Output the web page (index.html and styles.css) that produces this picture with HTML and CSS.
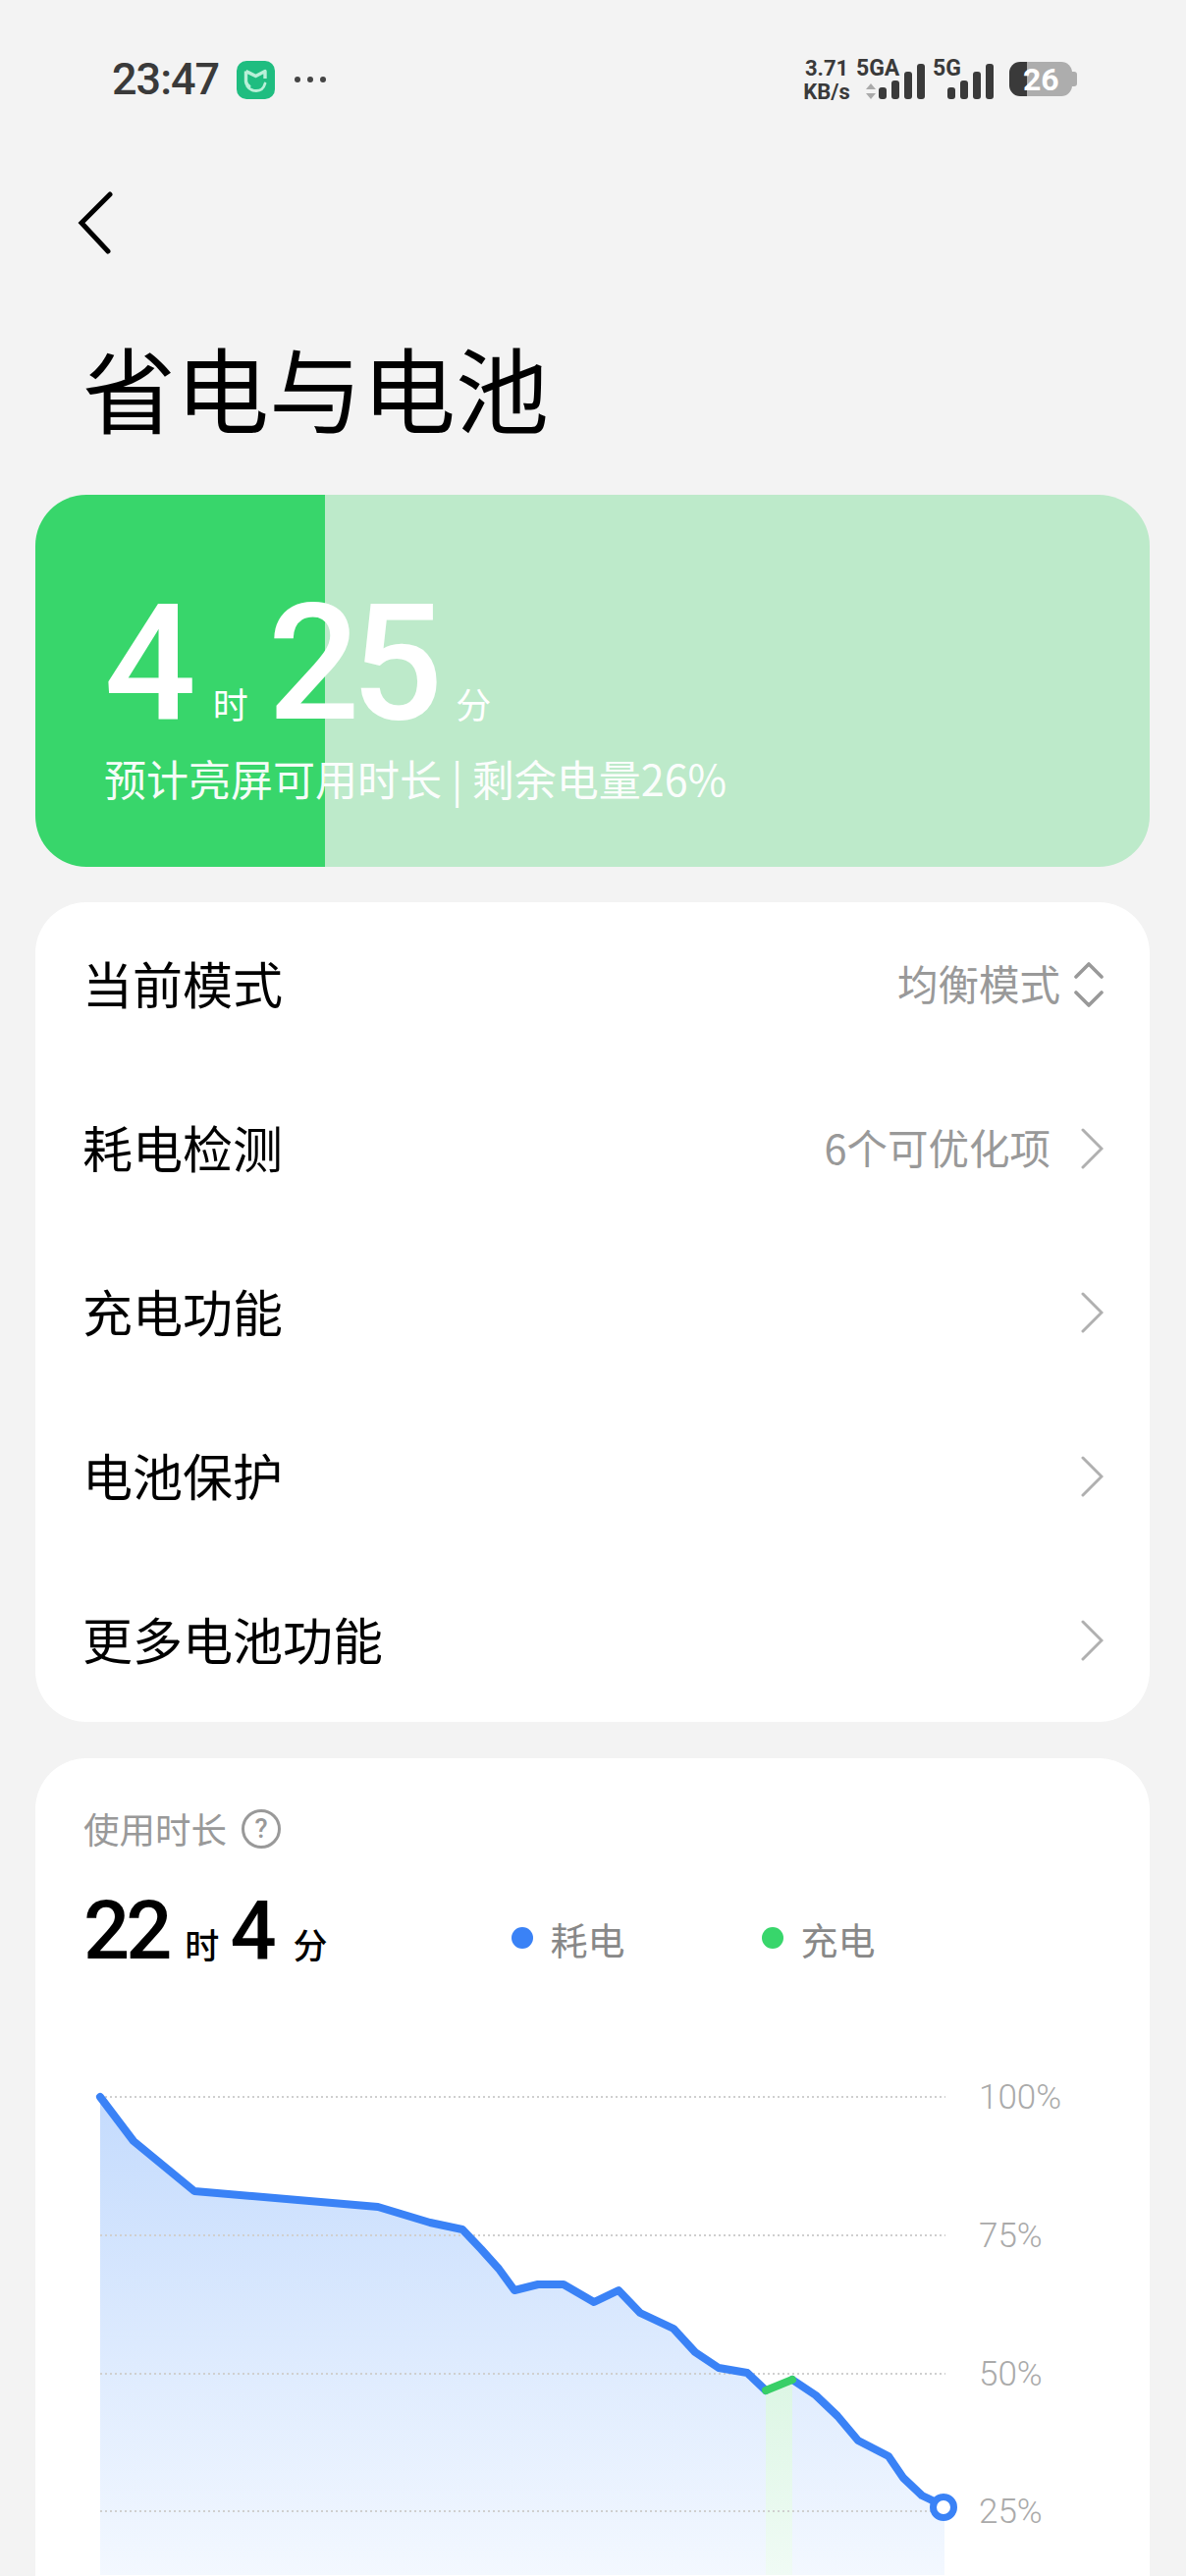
FILE: index.html
```html
<!DOCTYPE html>
<html lang="zh-CN">
<head>
  <meta charset="UTF-8">
  <title>省电与电池</title>
  <link rel="stylesheet" href="styles.css">
</head>
<body>
  <div class="status">
    <div class="status-left">
      <span class="clock">23:47</span>
      <svg class="mi-icon" width="39" height="39" viewBox="0 0 39 39">
        <rect width="39" height="39" rx="10" fill="#1fbd80"/>
        <path d="M9.5 10.5L19.5 15.5L29 10.5V18M9.5 10.5V21Q10 25 14 27" fill="none" stroke="#b9f0d8" stroke-width="3.4" stroke-linejoin="round"/>
        <path d="M11 26Q14 30.5 20 30.5Q27 30.5 29 23" fill="none" stroke="#b9f0d8" stroke-width="2.8" stroke-linecap="round"/>
      </svg>
      <span class="dots"><i></i><i></i><i></i></span>
    </div>
    <div class="status-right">
      <div class="speed"><span>3.71</span><span>KB/s</span></div>
      <div class="sim">
        <span class="sim-name">5GA</span>
        <svg class="updown" width="10" height="16" viewBox="0 0 10 16"><path d="M5 0L10 6H0ZM5 16L0 10H10Z" fill="#aaa"/></svg>
        <div class="bars"><i class="b1"></i><i class="b2"></i><i class="b3"></i><i class="b4"></i></div>
      </div>
      <div class="sim sim-two">
        <span class="sim-name">5G</span>
        <div class="bars"><i class="b1"></i><i class="b2"></i><i class="b3"></i><i class="b4"></i></div>
      </div>
      <div class="battery"><span>26</span></div>
      <i class="battery-nub"></i>
    </div>
  </div>

  <div class="back">
    <svg width="36" height="64" viewBox="0 0 36 64"><path d="M33 3L4 32L31 61" fill="none" stroke="#000" stroke-width="5" stroke-linecap="round" stroke-linejoin="miter"/></svg>
  </div>

  <h1 class="title">省电与电池</h1>

  <div class="hero">
    <div class="hero-time">
      <b>4</b><span class="hero-unit unit-h">时</span><b>25</b><span class="hero-unit unit-m">分</span>
    </div>
    <p class="hero-note">预计亮屏可用时长 | 剩余电量26%</p>
  </div>

  <div class="card menu">
    <div class="row">
      <span>当前模式</span>
      <div class="row-right mode">
        <span class="value">均衡模式</span>
        <svg width="30" height="46" viewBox="0 0 30 46"><path d="M2 15L15 2L28 15M2 31L15 44L28 31" fill="none" stroke="#999" stroke-width="3.6" stroke-linecap="round" stroke-linejoin="round"/></svg>
      </div>
    </div>
    <div class="row">
      <span>耗电检测</span>
      <div class="row-right">
        <span class="value">6个可优化项</span>
        <svg width="24" height="42" viewBox="0 0 24 42"><path d="M3 2L22 21L3 40" fill="none" stroke="#b0b0b0" stroke-width="3" stroke-linecap="round"/></svg>
      </div>
    </div>
    <div class="row">
      <span>充电功能</span>
      <div class="row-right">
        <svg width="24" height="42" viewBox="0 0 24 42"><path d="M3 2L22 21L3 40" fill="none" stroke="#b0b0b0" stroke-width="3" stroke-linecap="round"/></svg>
      </div>
    </div>
    <div class="row">
      <span>电池保护</span>
      <div class="row-right">
        <svg width="24" height="42" viewBox="0 0 24 42"><path d="M3 2L22 21L3 40" fill="none" stroke="#b0b0b0" stroke-width="3" stroke-linecap="round"/></svg>
      </div>
    </div>
    <div class="row">
      <span>更多电池功能</span>
      <div class="row-right">
        <svg width="24" height="42" viewBox="0 0 24 42"><path d="M3 2L22 21L3 40" fill="none" stroke="#b0b0b0" stroke-width="3" stroke-linecap="round"/></svg>
      </div>
    </div>
  </div>

  <div class="card usage">
    <div class="usage-head">
      <span>使用时长</span>
      <span class="help">?</span>
    </div>
    <div class="usage-total">
      <b>22</b><span class="total-unit unit-hour">时</span><b>4</b><span class="total-unit unit-min">分</span>
      <div class="legend">
        <i class="dot dot-blue"></i><span>耗电</span>
        <i class="dot dot-green"></i><span>充电</span>
      </div>
    </div>
    <svg class="chart" width="1134" height="524" viewBox="36 2100 1134 524">
      <defs>
        <linearGradient id="areaFill" x1="0" y1="0" x2="0" y2="1">
          <stop offset="0" stop-color="#c4dbfd"/>
          <stop offset="1" stop-color="#f3f8ff"/>
        </linearGradient>
        <linearGradient id="chargeFill" x1="0" y1="0" x2="0" y2="1">
          <stop offset="0" stop-color="#dcf6e4"/>
          <stop offset="1" stop-color="#f0fbf5"/>
        </linearGradient>
      </defs>
      <path fill="url(#areaFill)" d="M102 2137L136 2182L198 2233L385 2249L438 2265L471 2272L490 2292L508 2312L524 2334L548 2328L574 2328L605 2346L630 2334L652 2357L686 2373L708 2397L732 2413L761 2418L780 2436L807 2425L831 2441L853 2462L874 2487L905 2503L920 2525L939 2543L962 2554V2624H102Z"/>
      <path fill="url(#chargeFill)" d="M780 2436L807 2425V2624H780Z"/>
      <g class="grid">
        <line x1="102" y1="2137" x2="963" y2="2137"/>
        <line x1="102" y1="2278" x2="963" y2="2278"/>
        <line x1="102" y1="2419" x2="963" y2="2419"/>
        <line x1="102" y1="2559" x2="963" y2="2559"/>
      </g>
      <path class="line-blue" d="M102 2137L136 2182L198 2233L385 2249L438 2265L471 2272L490 2292L508 2312L524 2334L548 2328L574 2328L605 2346L630 2334L652 2357L686 2373L708 2397L732 2413L761 2418L780 2436"/>
      <path class="line-blue" d="M807 2425L831 2441L853 2462L874 2487L905 2503L920 2525L939 2543L962 2554"/>
      <path class="line-green" d="M780 2436L807 2425"/>
      <circle class="line-end" cx="961" cy="2555" r="10.5"/>
      <text class="axis" x="997" y="2149">100%</text>
      <text class="axis" x="997" y="2290">75%</text>
      <text class="axis" x="997" y="2431">50%</text>
      <text class="axis" x="997" y="2571">25%</text>
    </svg>
  </div>
</body>
</html>
```

FILE: styles.css
```css
html, body {
  height: 2624px;
  overflow: hidden;
}
body {
  margin: 0;
  background-color: #f3f3f3;
  color: #000;
  font-family: "Noto Sans CJK SC", Roboto, sans-serif;
}

/* status bar */
.status {
  display: flex;
  justify-content: space-between;
  height: 162px;
  padding: 60px 111px 0 114px;
  box-sizing: border-box;
  color: #3a3a3a;
  font-family: Roboto, sans-serif;
}
.status-left {
  display: flex;
  align-items: flex-start;
}
.clock {
  width: 109px;
  font-size: 45px;
  font-weight: 500;
  line-height: 42px;
  letter-spacing: -1px;
}
.mi-icon {
  margin: 2px 0 0 18px;
}
.dots {
  display: flex;
  gap: 7px;
  margin: 18px 0 0 20px;
}
.dots i {
  width: 6px;
  height: 6px;
  border-radius: 50%;
  background-color: #444;
}
.status-right {
  display: flex;
  align-items: flex-start;
  height: 40px;
}
.speed {
  display: flex;
  flex-direction: column;
  align-items: center;
  gap: 4px;
  width: 48px;
  font-size: 22px;
  font-weight: 700;
  line-height: 20px;
}
/* name, arrows and bars share one grid cell */
.sim {
  display: grid;
  width: 70px;
  height: 38px;
  margin-left: 6px;
  margin-top: 3px;
}
.sim > * {
  grid-area: 1 / 1;
}
.sim-two {
  width: 62px;
  margin-left: 8px;
}
.sim-name {
  align-self: start;
  justify-self: start;
  margin-top: -3px;
  font-size: 23px;
  font-weight: 700;
  line-height: 20px;
}
.updown {
  align-self: end;
  justify-self: start;
  margin-left: 10px;
}
.bars {
  display: flex;
  align-items: flex-end;
  align-self: end;
  justify-self: end;
  gap: 5px;
}
.bars i {
  width: 8px;
  border-radius: 3px;
  background-color: #3a3a3a;
}
.bars .b1 { height: 12px; }
.bars .b2 { height: 19px; }
.bars .b3 { height: 28px; }
.bars .b4 { height: 36px; }
.battery {
  width: 64px;
  height: 35px;
  margin: 3px 0 0 16px;
  border-radius: 11px;
  background: linear-gradient(90deg, #3a3a3a 18px, #adadad 18px);
  color: #fff;
  font-size: 32px;
  font-weight: 700;
  line-height: 36px;
  text-indent: 14px;
}
.battery-nub {
  width: 5px;
  height: 15px;
  margin: 13px 0 0 0;
  border-radius: 0 3px 3px 0;
  background-color: #adadad;
}

/* header */
.back {
  height: 64px;
  padding: 33px 0 0 79px;
}
.back svg {
  display: block;
}
.title {
  margin: 80px 0 0 84px;
  font-size: 95px;
  font-weight: 400;
  line-height: 110px;
}

/* battery card */
.hero {
  height: 379px;
  margin: 55px 37px 0 36px;
  padding: 97px 0 0 70px;
  box-sizing: border-box;
  border-radius: 52px;
  background: linear-gradient(90deg, #38d66b 295px, #bdeaca 295px);
  color: #fff;
}
.hero-time {
  display: flex;
  align-items: baseline;
  height: 150px;
  font-family: Roboto, sans-serif;
}
.hero-time b {
  font-size: 165px;
  font-weight: 500;
  line-height: 150px;
  letter-spacing: -9px;
}
.hero-unit {
  font-family: "Noto Sans CJK SC", sans-serif;
  font-size: 36px;
  line-height: 40px;
}
.unit-h {
  margin: 0 20px 0 26px;
}
.unit-m {
  margin-left: 22px;
}
.hero-note {
  margin: 15px 0 0;
  font-size: 43px;
  line-height: 52px;
  opacity: 0.95;
}

/* white cards */
.card {
  margin: 36px 37px 0 36px;
  border-radius: 52px;
  background-color: #fff;
}
.row {
  display: flex;
  justify-content: space-between;
  align-items: center;
  height: 167px;
  padding: 0 47px 4px 48px;
  box-sizing: border-box;
  font-size: 51px;
}
.row svg {
  margin-top: 4px;
}
.row-right {
  display: flex;
  align-items: center;
  gap: 30px;
}
.row-right.mode {
  gap: 14px;
}
.value {
  color: #999;
  font-size: 41.5px;
}

/* usage card */
.usage {
  height: 900px;
  margin-top: 37px;
  padding-top: 51px;
  box-sizing: border-box;
}
.usage-head {
  display: flex;
  align-items: center;
  height: 41px;
  padding-left: 49px;
  color: #999;
  font-size: 36.5px;
}
.help {
  width: 34px;
  height: 34px;
  margin-left: 15px;
  border: 3px solid #999;
  border-radius: 50%;
  font-family: Roboto, sans-serif;
  font-size: 27px;
  font-weight: 500;
  line-height: 34px;
  text-align: center;
}
.usage-total {
  display: flex;
  align-items: baseline;
  height: 100px;
  margin-top: 34px;
  padding-left: 49px;
  font-family: Roboto, sans-serif;
}
.usage-total b {
  font-size: 83px;
  font-weight: 500;
  line-height: 100px;
  letter-spacing: -4px;
}
.total-unit {
  font-family: "Noto Sans CJK SC", sans-serif;
  font-size: 35px;
  font-weight: 500;
}
.unit-hour {
  margin: 0 11px 0 17px;
}
.unit-min {
  margin-left: 21px;
}
.legend {
  display: flex;
  align-items: center;
  align-self: flex-start;
  height: 100px;
  margin: 7px 0 0 187px;
  color: #888;
  font-family: "Noto Sans CJK SC", sans-serif;
  font-size: 38px;
}
.dot {
  width: 22px;
  height: 22px;
  margin-right: 18px;
  border-radius: 50%;
}
.dot-blue {
  background-color: #3a82f6;
}
.dot-green {
  margin-left: 139px;
  background-color: #38d66b;
}

/* chart */
.chart {
  display: block;
  margin-top: 82px;
}
.grid line {
  stroke: #cfcfcf;
  stroke-width: 2;
  stroke-dasharray: 2 3;
}
.line-blue, .line-green {
  fill: none;
  stroke-width: 8;
  stroke-linecap: round;
  stroke-linejoin: round;
}
.line-blue {
  stroke: #3a82f6;
}
.line-green {
  stroke: #38cf67;
}
.line-end {
  fill: #fff;
  stroke: #3a82f6;
  stroke-width: 7;
}
.axis {
  fill: #aaa;
  font-family: Roboto, sans-serif;
  font-size: 35px;
  font-weight: 300;
}
```
